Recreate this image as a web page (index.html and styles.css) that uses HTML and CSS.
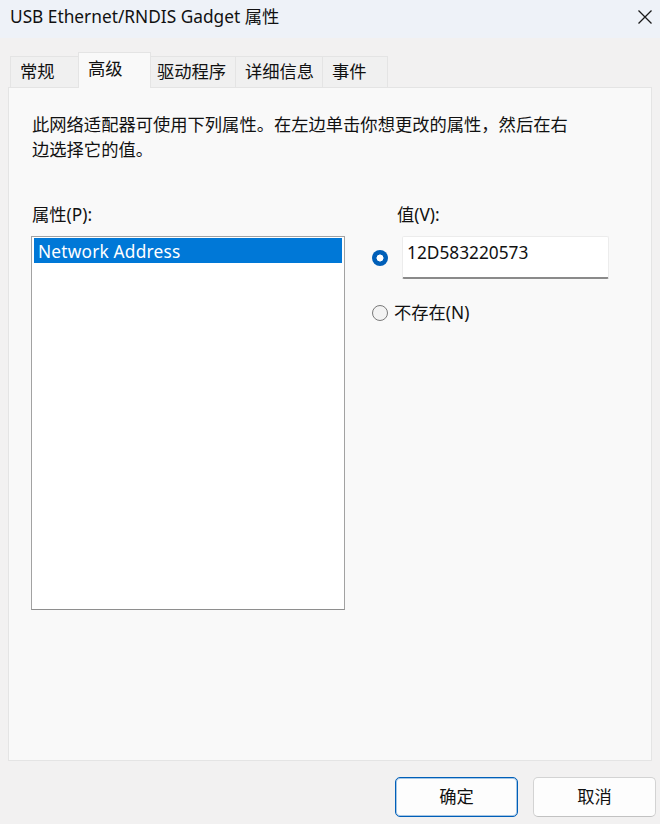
FILE: index.html
```html
<!DOCTYPE html>
<html lang="zh-CN">
<head>
<meta charset="utf-8">
<title>USB Ethernet/RNDIS Gadget 属性</title>
<link rel="stylesheet" href="styles.css">
</head>
<body>
<div class="window">
  <div class="titlebar">
    <span class="title">USB Ethernet/RNDIS Gadget 属性</span>
    <svg class="close" width="16" height="16" viewBox="0 0 16 16"><path d="M1.5 1.5 L14.5 14.5 M14.5 1.5 L1.5 14.5" stroke="#1a1a1a" stroke-width="1.3" fill="none"/></svg>
  </div>
  <div class="tabs">
    <div class="tab t1">常规</div>
    <div class="tab active t2">高级</div>
    <div class="tab t3">驱动程序</div>
    <div class="tab t4">详细信息</div>
    <div class="tab t5">事件</div>
  </div>
  <div class="panel">
    <p class="desc">此网络适配器可使用下列属性。在左边单击你想更改的属性，然后在右边选择它的值。</p>
    <div class="cols">
      <div class="left">
        <div class="label">属性(P):</div>
        <div class="listbox">
          <div class="item selected">Network Address</div>
        </div>
      </div>
      <div class="right">
        <div class="label vlabel">值(V):</div>
        <div class="row">
          <span class="radio on"></span>
          <div class="input">12D583220573</div>
        </div>
        <div class="row row2">
          <span class="radio"></span>
          <span class="rlabel">不存在(N)</span>
        </div>
      </div>
    </div>
  </div>
  <div class="footer">
    <div class="btn default">确定</div>
    <div class="btn">取消</div>
  </div>
</div>
</body>
</html>
```
FILE: styles.css
```css
* { box-sizing: border-box; }
html, body { margin: 0; padding: 0; }
body {
  width: 660px;
  height: 824px;
  background: #f2f1f1;
  font-family: "Noto Sans", "Noto Sans CJK SC", sans-serif;
  font-size: 17.3px;
  color: #111;
  overflow: hidden;
}
.window { width: 660px; height: 824px; display: flex; flex-direction: column; }
.titlebar {
  height: 38px;
  background: #eef2f8;
  display: flex;
  align-items: center;
  justify-content: space-between;
  padding: 0 7px 4px 10px;
}
.title { font-size: 17.3px; line-height: 24px; }
.close { display: block; }
.tabs {
  height: 49px;
  display: flex;
  align-items: flex-end;
  padding-left: 10px;
  position: relative;
  z-index: 1;
}
.tab {
  height: 31px;
  line-height: 29px;
  padding-left: 9px;
  border: 1px solid #e4e4e4;
  border-bottom: none;
  border-right: none;
  background: #f0f0f0;
  white-space: nowrap;
}
.t1 { width: 68px; padding-left: 9px; }
.t2 { width: 73px; }
.t3 { width: 84px; padding-left: 6px; }
.t4 { width: 87px; }
.t5 { width: 66px; border-right: 1px solid #e4e4e4; }
.tab.active {
  height: 36px;
  margin-bottom: -1px;
  line-height: 31px;
  background: #f9f9f9;
  border-right: 1px solid #e4e4e4;
}
.tab.active + .tab { border-left: none; }
.panel {
  margin: 0 8px;
  height: 674px;
  background: #f9f9f9;
  border: 1px solid #e4e4e4;
  padding: 24px 0 0 22px;
}
.desc {
  margin: 0;
  width: 545px;
  line-height: 25px;
  padding-left: 1px;
}
.cols { display: flex; margin-top: 40px; }
.left { width: 314px; }
.label { line-height: 25px; height: 25px; padding-left: 1px; margin-bottom: 9px; }
.listbox {
  height: 374px;
  background: #fff;
  border: 1px solid #a2a2a2;
  border-bottom-color: #8e8e8e;
  padding: 1px 2px;
}
.item {
  height: 25px;
  line-height: 28px;
  padding-left: 4px;
  letter-spacing: 0.2px;
}
.item.selected { background: #0078d7; color: #fff; }
.right { margin-left: 27px; }
.vlabel { padding-left: 25px; }
.row { display: flex; align-items: center; }
.radio {
  width: 16px;
  height: 16px;
  border-radius: 50%;
  border: 1px solid #7a7a7a;
  background: #f3f3f3;
  flex: none;
}
.radio.on {
  border: none;
  background: radial-gradient(circle, #fff 0 3.2px, #005fb8 3.8px);
}
.input {
  margin-left: 14px;
  width: 207px;
  height: 43px;
  background: #fff;
  border: 1px solid #ececec;
  border-bottom: 2px solid #8a8a8a;
  padding: 4px 0 0 4px;
  line-height: 24px;
  border-radius: 2px;
}
.row2 { margin-top: 21px; }
.rlabel { margin-left: 6px; line-height: 25px; }
.footer {
  display: flex;
  justify-content: flex-end;
  gap: 15px;
  padding: 16px 4px 0 0;
}
.btn {
  width: 123px;
  height: 40px;
  border: 1px solid #d3d3d3;
  border-bottom-color: #c2c2c2;
  border-radius: 5px;
  background: #fdfdfd;
  text-align: center;
  line-height: 37px;
}
.btn.default {
  border: 1px solid #005fb8;
  box-shadow: inset 0 0 0 1px rgba(0, 95, 184, 0.35);
}
```
